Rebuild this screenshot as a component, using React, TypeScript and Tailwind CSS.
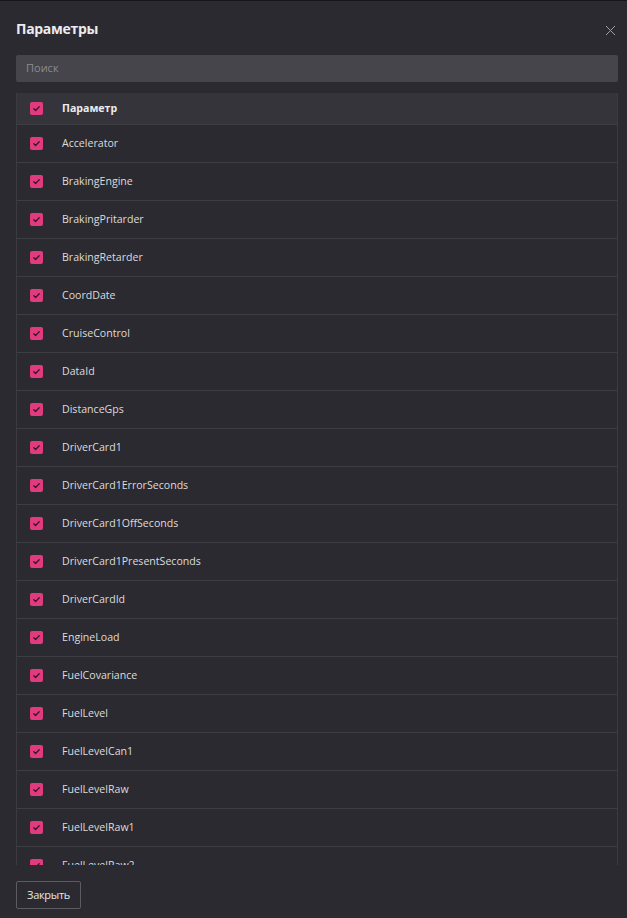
import { X } from 'lucide-react';

const params = [
    'Accelerator',
    'BrakingEngine',
    'BrakingPritarder',
    'BrakingRetarder',
    'CoordDate',
    'CruiseControl',
    'DataId',
    'DistanceGps',
    'DriverCard1',
    'DriverCard1ErrorSeconds',
    'DriverCard1OffSeconds',
    'DriverCard1PresentSeconds',
    'DriverCardId',
    'EngineLoad',
    'FuelCovariance',
    'FuelLevel',
    'FuelLevelCan1',
    'FuelLevelRaw',
    'FuelLevelRaw1',
    'FuelLevelRaw2',
    'FuelLevelRaw3',
];

const Check = () => (
    <div className="w-[13px] h-[13px] rounded-[2px] bg-[#e23a7e] flex items-center justify-center">
        <svg width="9" height="9" viewBox="0 0 10 10" fill="none">
            <path d="M2 5.2 L4 7.2 L8 3" stroke="#3a1526" strokeWidth="1.4" strokeLinecap="round" strokeLinejoin="round" />
        </svg>
    </div>
);

const App = () => {
    return (
        <div className="w-full h-[918px] bg-[#2b2a30] border-t border-[#16161a] flex flex-col text-[#e2e2e4]" style={{ fontFamily: '"Open Sans", "Noto Sans", sans-serif' }}>
            <div className="flex items-center justify-between pl-4 pr-[8px] h-[54px] shrink-0">
                <p className="text-[14px] font-bold text-[#ececee] tracking-[-0.3px]">Параметры</p>
                <X size={17} strokeWidth={1.4} className="text-[#a0a0a6] mt-[4px]" />
            </div>
            <div className="ml-4 mr-[9px] h-[27px] shrink-0 bg-[#46454b] rounded-[2px] flex items-center px-[10px]">
                <span className="text-[11px] text-[#8c8b91]">Поиск</span>
            </div>
            <div className="ml-4 mr-[9px] mt-[11px] flex-1 min-h-0 overflow-hidden border-l border-r border-[#3c3b42]">
                <div className="h-[32px] bg-[#35343a] border-b border-[#3e3d44] flex items-center pl-[13px]">
                    <Check />
                    <span className="ml-[19px] text-[10.6px] font-bold text-[#ececee]">Параметр</span>
                </div>
                {params.map((name) => (
                    <div key={name} className="h-[38px] border-b border-[#3e3d44] flex items-center pl-[13px]">
                        <Check />
                        <span className="ml-[19px] text-[10.6px] text-[#dcdcde]">{name}</span>
                    </div>
                ))}
            </div>
            <div className="shrink-0 pt-4 pb-[9px] px-4">
                <div className="w-[65px] h-[28px] border border-[#5c5b61] rounded-[2px] flex items-center justify-center">
                    <span className="text-[11px] tracking-[-0.3px] text-[#e6e6e8]">Закрыть</span>
                </div>
            </div>
        </div>
    );
};

export default App;
